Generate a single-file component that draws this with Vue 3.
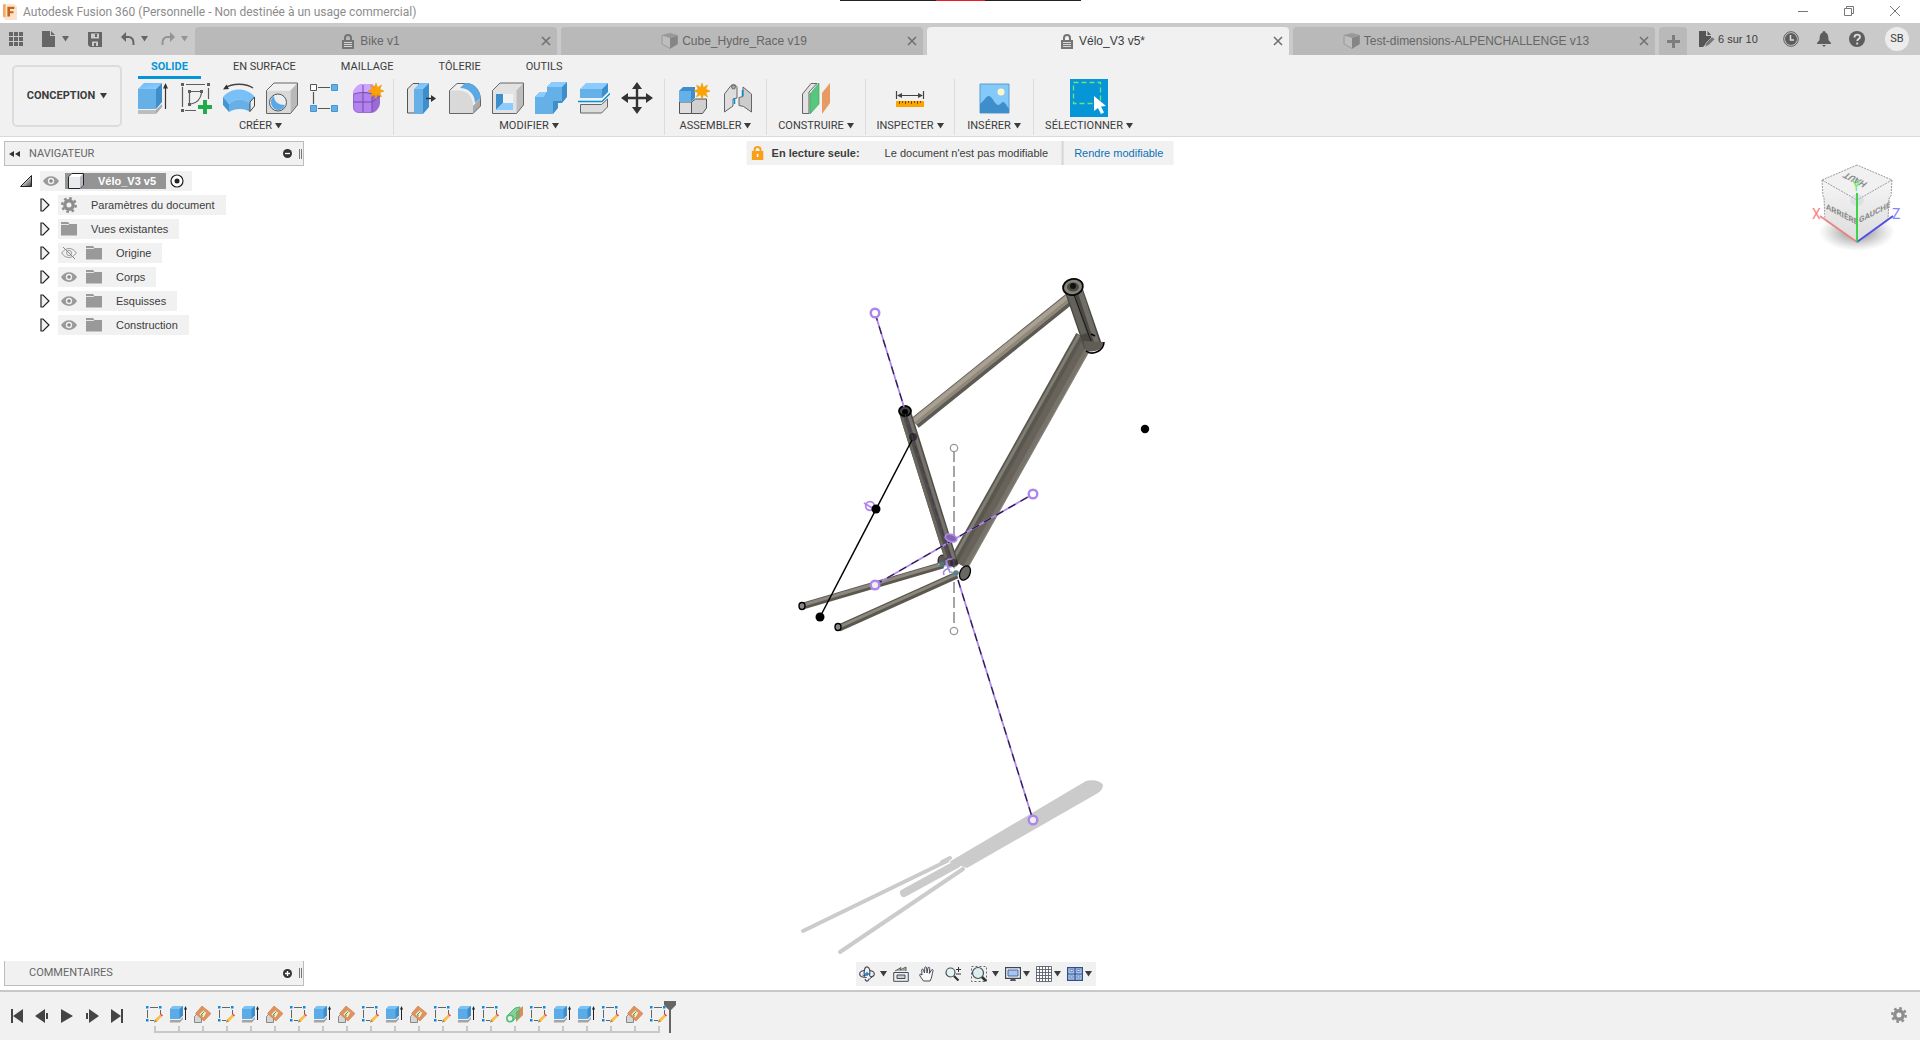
<script setup>
const documents = [
  { title: 'Bike v1', icon: 'lock', active: false },
  { title: 'Cube_Hydre_Race v19', icon: 'part', active: false },
  { title: 'Vélo_V3 v5*', icon: 'lock', active: true },
  { title: 'Test-dimensions-ALPENCHALLENGE v13', icon: 'part', active: false }
]

const ribbonTabs = ['SOLIDE', 'EN SURFACE', 'MAILLAGE', 'TÔLERIE', 'OUTILS']

const groups = [
  { label: 'CRÉER', id: 'create', tools: ['extrude', 'sketch', 'revolve', 'hole', 'pattern', 'form'] },
  { label: 'MODIFIER', id: 'modify', tools: ['presspull', 'fillet', 'shell', 'combine', 'split', 'move'] },
  { label: 'ASSEMBLER', id: 'assemble', tools: ['component', 'joint'] },
  { label: 'CONSTRUIRE', id: 'construct', tools: ['plane'] },
  { label: 'INSPECTER', id: 'inspect', tools: ['measure'] },
  { label: 'INSÉRER', id: 'insert', tools: ['image'] },
  { label: 'SÉLECTIONNER', id: 'select', tools: ['select'] }
]

const tree = [
  { label: 'Paramètres du document', icon: 'gear', eye: null },
  { label: 'Vues existantes', icon: 'folder', eye: null },
  { label: 'Origine', icon: 'folder', eye: 'eye-off' },
  { label: 'Corps', icon: 'folder', eye: 'eye' },
  { label: 'Esquisses', icon: 'folder', eye: 'eye' },
  { label: 'Construction', icon: 'folder', eye: 'eye' }
]

const viewTools = [
  { icon: 'orbit', menu: true },
  { icon: 'look', menu: false },
  { icon: 'hand', menu: false },
  { icon: 'zoom', menu: false },
  { icon: 'fit', menu: true },
  { icon: 'display', menu: true },
  { icon: 'grid', menu: true },
  { icon: 'panes', menu: true }
]

const playback = ['first', 'prev', 'play', 'next', 'last']

const timeline = 'sk ex pl sk ex pl sk ex pl sk ex pl sk ex sk pi sk ex ex sk pl sk'.split(' ')
</script>

<template>
  <div class="app">
    <svg class="defs" aria-hidden="true">
      <defs>
        <linearGradient id="gTop" x1="0" y1="0" x2="1" y2="1"><stop offset="0" stop-color="#6cb9f7" /><stop offset="1" stop-color="#8fd0ff" /></linearGradient>
        <linearGradient id="gEdge" x1="0" y1="0" x2="1" y2="1"><stop offset="0.3" stop-color="#fff" /><stop offset="1" stop-color="#333" /></linearGradient>
      </defs>

      <symbol id="i-lock" viewBox="0 0 12 15"><path d="M3 7V4a3 3 0 0 1 6 0v3" fill="none" stroke="currentColor" stroke-width="2" /><path d="M0 6h12v9H0z" fill="currentColor" /><path d="M2 8.500h8M2 10.500h8M2 12.500h8" stroke="#d8d8d8" /></symbol>
      <symbol id="i-part" viewBox="0 0 17 16"><path d="M1 2.500L9 .5l7.500 2V11L9 15.500 1 11z" fill="#bdbdbd" stroke="#999" /><path d="M1 2.500l8 2.500 7.500-2.500L9 .5z" fill="#999" /><path d="M9 5v10.500l7.500-4.500V2.500z" fill="#858585" /></symbol>
      <symbol id="i-caret" viewBox="0 0 7 6"><path d="M0 0h7L3.500 5.500z" fill="currentColor" /></symbol>
      <symbol id="i-close" viewBox="0 0 10 10"><path d="M1 1l8 8M9 1l-8 8" stroke="currentColor" stroke-width="1.600" fill="none" /></symbol>

      <symbol id="i-extrude" viewBox="0 0 32 32"><path d="M1 28h18l6-6v3l-6 7H1z" fill="#a9a9a9" /><path d="M1 28h18v4H1z" fill="#bdbdbd" /><path d="M1 7h18v20H1z" fill="#66b0e8" /><path d="M1 7l6-6h18l-6 6z" fill="url(#gTop)" /><path d="M19 7l6-6v19l-6 7z" fill="#3d8ecb" /><path d="M28.500 27V4" stroke="#333" stroke-width="1.200" /><path d="M26 6.500L28.500 1 31 6.500z" fill="#333" /></symbol>
      <symbol id="i-sketch" viewBox="0 0 32 32"><path d="M2.500 5v20M6 2.500h19M28.500 6v11M5 28.500h11" stroke="#5d5d5d" stroke-width="1.200" /><path d="M1 1h3v3H1zM27 1h3v3h-3zM1 27h3v3H1zM8 8h3v3H8zM20 8h3v3h-3zM8 21h3v3H8z" fill="#5d5d5d" /><path d="M11 9.500h9M9.500 11v10M21.500 11c-1 6-4 10-10.500 11" fill="none" stroke="#5d5d5d" stroke-width="1.200" /><path d="M23 18h4v5h5v4h-5v5h-4v-5h-5v-4h5z" fill="#20ac4b" /></symbol>
      <symbol id="i-revolve" viewBox="0 0 32 32"><path d="M2 6C9 1 23 1 30 6" fill="none" stroke="#444" stroke-width="1.300" /><path d="M0 7.500L3.500 2.500 6 7z" fill="#333" /><path d="M0 15C8 5 24 5 32 15l-5 7C20 16 12 16 6 22z" fill="#79c0f8" /><path d="M0 15v8l6 7v-8z" fill="#4595d3" /><path d="M6 22c6-6 15-6 21 0v8c-5-4-15-4-21 0z" fill="#66b0e8" /><path d="M27 20l4.500-5v9L27 29.500z" fill="#eee" stroke="#444" /></symbol>
      <symbol id="i-hole" viewBox="0 0 32 32"><path d="M.5 8.500h24v23H.5z" fill="#d9d9d9" /><path d="M.5 8.500L8 1h23.500l-7 7.500z" fill="#f0f0f0" /><path d="M24.500 8.500L31.500 1v22l-7 8.500z" fill="#b9b9b9" /><path d="M.5 8.500L8 1h23.500v22l-7 8.500H.5z" fill="none" stroke="#666" /><circle cx="12" cy="20.500" r="8.500" fill="#eee" stroke="#555" /><path d="M8 14c0 6 5 9 11 9a7 7 0 0 1-13 1c-2-4-1-8 2-10z" fill="#5aa9e6" /></symbol>
      <symbol id="i-pattern" viewBox="0 0 32 32"><path d="M9 5.500h12M4.500 10v12M9 26.500h12" stroke="#555" stroke-width="1.200" /><path d="M1.500 2.500h6v6h-6z" fill="#fff" stroke="#555" /><path d="M22.500 2.500h6v6h-6zM1.500 23.500h6v6h-6zM22.500 23.500h6v6h-6z" fill="#66b0e8" stroke="#4595d3" /></symbol>
      <symbol id="i-star" viewBox="0 0 16 16"><path d="M8 0l1.500 4.500L13.500 2l-1.700 4.300L16 8l-4.200 1.700 1.700 4.300-4-2.500L8 16l-1.500-4.500-4 2.500 1.700-4.300L0 8l4.200-1.700L2.500 2l4 2.500z" fill="#fda300" stroke="#e79100" stroke-width=".5" /></symbol>
      <symbol id="i-form" viewBox="0 0 32 32"><path d="M1 12c0-5 5-10 10-10h9l8 8v11c0 5-5 10-9 10H8c-4 0-7-2-7-6z" fill="#9b6ad6" /><path d="M1 12c0-5 5-10 10-10h9c3 3 3 5 0 9z" fill="#cda4ff" /><path d="M2 12h18v18H8c-4 0-6-2-6-5z" fill="#b283ee" /><path d="M1 20h19l8-6M11 3v27M20 11v19M2 12c6-2 14-2 18 0" fill="none" stroke="#744aa8" /><use href="#i-star" x="16" y="1" width="16" height="16" /></symbol>
      <symbol id="i-presspull" viewBox="0 0 32 32"><path d="M1.500 7L7 1.500h6V31H1.500z" fill="#e3e3e3" stroke="#555" /><path d="M8 7l6-6h9l-6 6z" fill="url(#gTop)" /><path d="M8 7h9v25H8z" fill="#66b0e8" /><path d="M17 7l6-6v24l-6 7z" fill="#3d8ecb" /><path d="M20 16.500h7" stroke="#333" stroke-width="1.500" /><path d="M25 13l5 3.500-5 3.500z" fill="#333" /></symbol>
      <symbol id="i-fillet" viewBox="0 0 32 32"><path d="M.5 8.500L8 1.500h9c8 0 14 6 14.500 16V24L24 31.500H.5z" fill="#efefef" /><path d="M.5 8.500H10c8 0 14 6 14 15v8H.5z" fill="#d9d9d9" /><path d="M24 24l7.500-8v8L24 31.500z" fill="#aaa" /><path d="M.5 8.500L8 1.500h9c8 0 14 6 14.500 16V24L24 31.500H.5z" fill="none" stroke="#666" /><path d="M11 6l5-5c8 0 15 5 15.500 15L26 21c0-9-7-15-15-15z" fill="#5aa9e6" /></symbol>
      <symbol id="i-shell" viewBox="0 0 32 32"><path d="M.5 8.500L8 1h23.500v22l-7 8.500H.5z" fill="#e2e2e2" /><path d="M24.500 8.500L31.500 1v22l-7 8.500z" fill="#bdbdbd" /><path d="M.5 8.500L8 1h23.500v22l-7 8.500H.5z" fill="none" stroke="#666" /><path d="M4 12h17v16H4z" fill="#f2f2f2" /><path d="M4 12h7v9l-7 7z" fill="#3d8ecb" /><path d="M4 28l7-7h10v7z" fill="#8accff" /></symbol>
      <symbol id="i-combine" viewBox="0 0 32 32"><path d="M0 15l5-5h7V5l5-5h15v15l-5 6h-4v5l-5 6H0z" fill="#3d8ecb" /><path d="M0 15h9l3-4V5h15v14h-9v13H0z" fill="#66b0e8" /><path d="M12 5l5-5h15l-5 5zM0 15l5-5h7l-3 5z" fill="#8accff" /></symbol>
      <symbol id="i-split" viewBox="0 0 32 32"><path d="M2 7h22v9H2z" fill="#66b0e8" /><path d="M2 7l6-6h22l-6 6z" fill="#8accff" /><path d="M24 7l6-6v9l-6 6z" fill="#3d8ecb" /><path d="M0 19.500h24l8-8" fill="none" stroke="#0091dc" stroke-width="1.300" /><path d="M2.500 22.500h21l6-5.500v8l-6 6h-21z" fill="#dcdcdc" stroke="#666" /></symbol>
      <symbol id="i-move" viewBox="0 0 32 32"><path d="M16 5v22M5 16h22" stroke="#333" stroke-width="2.400" /><path d="M16 0l5 7H11zM16 32l5-7H11zM0 16l7-5v10zM32 16l-7-5v10z" fill="#333" /></symbol>
      <symbol id="i-component" viewBox="0 0 32 32"><path d="M1.500 20h12v11.500h-12z" fill="#dedede" stroke="#555" /><path d="M13.500 20l4-3h11v9l-4 5.500h-11z" fill="#d0d0d0" stroke="#555" /><path d="M1 9l4-4h12v11l-4 4H1z" fill="#3d8ecb" /><path d="M1 9h12v11H1z" fill="#66b0e8" /><use href="#i-star" x="16" y="1" width="16" height="16" /></symbol>
      <symbol id="i-joint" viewBox="0 0 32 32"><path d="M3.500 12L10 3.500c3-2 6 0 6 2V16l-4 1v7l-8.500 6z" fill="#ddd" stroke="#666" /><circle cx="12.500" cy="5" r="2" fill="#aaa" stroke="#555" stroke-width=".8" /><path d="M30.500 30l-8-5.500-4.500-1v-8l4-1V5l8.500 7z" fill="#ccc" stroke="#666" /><path d="M13.500 16v6M21.500 8v6" stroke="#0091dc" stroke-width="1.500" /></symbol>
      <symbol id="i-plane" viewBox="0 0 32 32"><path d="M2.500 12L11 1.500h6L9 10v21.500H2.500z" fill="#e2e2e2" stroke="#666" /><path d="M10 12l9-11v21l-9 10z" fill="#56c77c" stroke="#38a05c" stroke-width=".6" /><path d="M22 11l8-10v20l-8 11z" fill="#e79a62" /></symbol>
      <symbol id="i-measure" viewBox="0 0 32 32"><path d="M2.500 9v8M29.500 9v8M5 13.500h22" stroke="#444" stroke-width="1.200" /><path d="M3 13.500L8 11v5zM29 13.500L24 11v5z" fill="#444" /><path d="M2 19h28v6H2z" fill="#fda300" /><path d="M5.500 19v3M8.500 19v2M11.500 19v3M14.500 19v2M17.500 19v3M20.500 19v2M23.500 19v3M26.500 19v2" stroke="#7c5000" /></symbol>
      <symbol id="i-image" viewBox="0 0 32 32"><path d="M2 2h29v29H2z" fill="#83c9fa" stroke="#5a9ccf" /><circle cx="23" cy="10" r="3.500" fill="#fff6c8" /><path d="M2 22c4-3 6-8 9-8s6 9 9 9 3-3 5-3 4 4 6 7v4H2z" fill="#3d8ecb" /></symbol>
      <symbol id="i-select" viewBox="0 0 38 38"><path d="M0 0h38v38H0z" fill="#0696d7" /><path d="M3.500 3.500h27v21h-27z" fill="none" stroke="#6fe07a" stroke-width="1.300" stroke-dasharray="5 3" /><path d="M24 17v15l4-3 3 6 3-1.500-3-6 5-.5z" fill="#fff" /></symbol>

      <symbol id="i-eye" viewBox="0 0 16 10"><path d="M0 5c4-6.500 12-6.500 16 0-4 6.500-12 6.500-16 0z" fill="#999" /><circle cx="8" cy="5" r="3.200" fill="#f1f1f1" /><circle cx="8" cy="5" r="1.800" fill="#888" /></symbol>
      <symbol id="i-eye-off" viewBox="0 0 16 12"><path d="M.7 6c4-6 11-6 14.600 0-4 6-11 6-14.600 0z" fill="none" stroke="#999" /><circle cx="8" cy="6" r="2.500" fill="none" stroke="#999" /><path d="M2 0l12 12" stroke="#888" /></symbol>
      <symbol id="i-folder" viewBox="0 0 16 14"><path d="M0 0h7l1.500 2H16v11.500H0z" fill="#999" /><path d="M0 2.500h8" stroke="#e5e5e5" /></symbol>
      <symbol id="i-gear" viewBox="0 0 16 16"><circle cx="8" cy="8" r="4.200" fill="none" stroke="#8d8d8d" stroke-width="3.400" /><circle cx="8" cy="8" r="6.800" fill="none" stroke="#8d8d8d" stroke-width="2.400" stroke-dasharray="2.700 2.640" /></symbol>

      <symbol id="i-orbit" viewBox="0 0 16 16"><path d="M5 4.500C2 5 .7 6.500.7 8c0 2 3 3.500 7 3.500M11 4.500c3 .6 4.300 2 4.300 3.500 0 1.500-1.500 2.700-4 3.200" fill="none" stroke="#444c5c" stroke-width="1.200" /><path d="M5.500 10C4.600 5 5.500.8 8 .8s3.400 4 2.600 8.500M6 13c.5 1.500 1.200 2.200 2 2.200 1 0 1.800-1 2.200-2.500" fill="none" stroke="#444c5c" stroke-width="1.200" /><path d="M10 9.500l3 1.500-2.500 2M3.500 9l2 1.500L7 8.500" fill="none" stroke="#444c5c" /><path d="M8 6v4M6 8h4" stroke="#0a7fd6" stroke-width="1.300" /></symbol>
      <symbol id="i-look" viewBox="0 0 16 16"><path d="M.7 6.500h14.600v8.800H.7z" fill="#eee" stroke="#444c5c" /><path d="M4 9h8v3.500H4z" fill="#ccc" stroke="#444c5c" /><path d="M2 5l6-3.500L7 4l6-3v4" fill="#aaa" stroke="#555" stroke-width=".9" /></symbol>
      <symbol id="i-hand" viewBox="0 0 16 16"><path d="M4.500 15L1 10c-1-2 .5-2.500 2-1L2.700 4c.2-1.200 1.500-1.200 1.800 0L5.500 7 5.800 1.700c.2-1.200 1.600-1.200 1.800 0L8 7l1-5c.3-1.200 1.700-1 1.700.3L10.400 7.500l2-3.500c.8-1 2-.4 1.600.8-1 3-1 7.200-3 10.200z" fill="#fafafa" stroke="#333a48" stroke-width=".9" /></symbol>
      <symbol id="i-zoom" viewBox="0 0 16 16"><circle cx="5.500" cy="6.500" r="4.500" fill="#e4f2f2" stroke="#444c5c" stroke-width="1.200" /><path d="M9 10l4.500 4.500" stroke="#333" stroke-width="2.200" /><path d="M13.500 1v5M11 3.500h5M11 8h5" stroke="#333" /></symbol>
      <symbol id="i-fit" viewBox="0 0 16 16"><path d="M.5 .5h15v15H.5z" fill="none" stroke="#666" stroke-dasharray="2 2" /><circle cx="7" cy="7" r="5.500" fill="#dcefed" stroke="#444c5c" stroke-width="1.200" /><path d="M11 11l4 4" stroke="#333" stroke-width="2.600" /></symbol>
      <symbol id="i-display" viewBox="0 0 16 16"><path d="M.6 1.600h14.800v10.800H.6z" fill="#f4f4f4" stroke="#3d4656" stroke-width="1.200" /><path d="M3 4h10v6H3z" fill="#a8c5ee" stroke="#4568a0" /><path d="M5 15h6l-1-2.500H6z" fill="#555" /></symbol>
      <symbol id="i-grid" viewBox="0 0 16 16"><path d="M.5 .5h15v15H.5z" fill="#fff" /><path d="M.5 .5h15v15H.5zM3.500 0v16M6.500 0v16M9.500 0v16M12.500 0v16M0 3.500h16M0 6.500h16M0 9.500h16M0 12.500h16" fill="none" stroke="#59606c" stroke-width=".9" /></symbol>
      <symbol id="i-panes" viewBox="0 0 16 16"><path d="M.6 1.600h14.800v12.800H.6zM8 1.600v12.800M.6 8h14.800" fill="#a8c5ee" stroke="#2f4f86" stroke-width="1.200" /><path d="M3 3.500h3v2H3zM10 3.500h3v2h-3zM3 10h3v2H3zM10 10h3v2h-3z" fill="#d9e6fa" stroke="#56749f" stroke-width=".7" /></symbol>

      <symbol id="i-first" viewBox="0 0 14 14"><path d="M1 0h2v14H1zM13 0v14L3 7z" fill="#444" /></symbol>
      <symbol id="i-prev" viewBox="0 0 14 14"><path d="M10 0v14L0 7zM11 4h2v6h-2z" fill="#444" /></symbol>
      <symbol id="i-play" viewBox="0 0 14 14"><path d="M1 0l12 7-12 7z" fill="#444" /></symbol>
      <symbol id="i-next" viewBox="0 0 14 14"><path d="M4 0l10 7-10 7zM1 4h2v6H1z" fill="#444" /></symbol>
      <symbol id="i-last" viewBox="0 0 14 14"><path d="M11 0h2v14h-2zM1 0l10 7L1 14z" fill="#444" /></symbol>

      <symbol id="t-sk" viewBox="0 0 17 17"><path d="M4 1.500h8M1.500 4v8M14.500 4v4M4 14.500h4" stroke="#666" /><path d="M0 0h2.500v2.500H0zM13 0h2.500v2.500H13zM0 13h2.500v2.500H0z" fill="#0a8de0" /><path d="M8 16.500l1-3 5-5 2 2-5 5z" fill="#fbc04a" /><path d="M8 16.500l1-3 2 2z" fill="#a98755" /><path d="M14 8.500l1-1 2 2-1 1z" fill="#ef3e42" /></symbol>
      <symbol id="t-ex" viewBox="0 0 17 17"><path d="M0 14h10l3-3v2l-3 3.500H0z" fill="#a5a5a5" /><path d="M0 3l3-3h10v9.500L9.500 13H0z" fill="#3d8ecb" /><path d="M0 3h9.500v10H0z" fill="#5aabe6" /><path d="M0 3l3-3h10L9.500 3z" fill="#7cc2f6" /><path d="M15.500 14V2" stroke="#222" /><path d="M14 3.500L15.500 0 17 3.500z" fill="#222" /></symbol>
      <symbol id="t-pl" viewBox="0 0 17 17"><path d="M.5 10.500l3-3h4v9h-7z" fill="#d5d5d5" stroke="#888" /><path d="M8 0l9 7.500L10 15 1.500 7.500z" fill="#e0935c" stroke="#c97840" stroke-width=".6" /><path d="M6 9l4-4M8 8l3-1-2 4" stroke="#eafbe9" stroke-width="1.500" fill="none" /><path d="M7 9l3-3" stroke="#1f9f4a" /></symbol>
      <symbol id="t-pi" viewBox="0 0 17 17"><path d="M1 10l8-8 5-1v6l-7 8z" fill="#7fd29b" stroke="#3aa560" stroke-width=".8" /><path d="M10 6l7-6v9l-7 7z" fill="#d98e5a" /><path d="M10 6l4-3v8l-4 3z" fill="#8aa56b" /><circle cx="4" cy="12.500" r="3.200" fill="#eee" stroke="#4fbf75" stroke-width="1.500" /></symbol>
    </svg>

    <header class="titlebar">
      <svg class="logo" viewBox="0 0 16 18"><path d="M0 0h13l3 3v15H3l-3-3z" fill="#fbe3cc" /><path d="M0 0h3v15l-3-1z" fill="#f4a868" /><path d="M5 3h8v2.500H8V8h4v2.500H8V14H5z" fill="#c76414" /></svg>
      <span class="title">Autodesk Fusion 360 (Personnelle - Non destinée à un usage commercial)</span>
      <div class="notch"></div>
      <div class="window-controls">
        <button aria-label="Réduire"><svg width="12" height="12" viewBox="0 0 12 12"><path d="M1 6.500h10" stroke="#777" /></svg></button>
        <button aria-label="Restaurer"><svg width="12" height="12" viewBox="0 0 12 12"><path d="M1.500 3.500h7v7h-7zM3.500 3.500v-2h7v7h-2" fill="none" stroke="#777" /></svg></button>
        <button aria-label="Fermer"><svg width="12" height="12" viewBox="0 0 12 12"><path d="M1 1l10 10M11 1L1 11" stroke="#777" /></svg></button>
      </div>
    </header>

    <div class="tabbar">
      <div class="quick">
        <button aria-label="Données"><svg width="14" height="14" viewBox="0 0 14 14"><path d="M0 0h4v4H0zM5 0h4v4H5zM10 0h4v4h-4zM0 5h4v4H0zM5 5h4v4H5zM10 5h4v4h-4zM0 10h4v4H0zM5 10h4v4H5zM10 10h4v4h-4z" fill="#666" /></svg></button>
        <button class="split-button" aria-label="Fichier"><svg width="14" height="16" viewBox="0 0 14 16"><path d="M0 0h8v5h5v11H0zM9 0l4 4H9z" fill="#666" /></svg><svg class="caret"><use href="#i-caret" /></svg></button>
        <button aria-label="Enregistrer"><svg width="14" height="15" viewBox="0 0 14 15"><path d="M0 0h14v15H2l-2-2z" fill="#666" /><path d="M3 1.500h8v5H3zM4 9.500h6V14H4z" fill="#ccc" /><path d="M7 2h2v3H7zM6 11h2v3H6z" fill="#666" /></svg></button>
        <button class="split-button" aria-label="Annuler"><svg width="14" height="14" viewBox="0 0 14 14"><path d="M3 5h5c3 0 5 3 4.500 8" fill="none" stroke="#666" stroke-width="2" /><path d="M0 5l5-5v10z" fill="#666" /></svg><svg class="caret"><use href="#i-caret" /></svg></button>
        <button class="split-button faded" aria-label="Rétablir"><svg width="14" height="14" viewBox="0 0 14 14"><path d="M11 5H6c-3 0-5 3-4.500 8" fill="none" stroke="#949494" stroke-width="2" /><path d="M14 5L9 0v10z" fill="#949494" /></svg><svg class="caret"><use href="#i-caret" /></svg></button>
      </div>
      <div class="documents">
        <div v-for="d in documents" :key="d.title" class="document" :class="{ active: d.active }">
          <span class="document-title"><svg :class="d.icon"><use :href="'#i-' + d.icon" /></svg>{{ d.title }}</span>
          <button class="close" aria-label="Fermer l'onglet"><svg width="10" height="10"><use href="#i-close" /></svg></button>
        </div>
        <button class="add" aria-label="Nouvel onglet"><svg width="13" height="13" viewBox="0 0 13 13"><path d="M6.500 0v13M0 6.500h13" stroke="#7d7d7d" stroke-width="3" /></svg></button>
      </div>
      <div class="account">
        <button class="quota"><svg width="16" height="16" viewBox="0 0 16 16"><path d="M0 0h7v5h5v2l-7 8-1 1H0zM8.500 0L12 4H8.500z" fill="#555" /><path d="M6 16l1-4 6-6 3 2-6 6z" fill="#777" stroke="#ccc" stroke-width=".6" /></svg>6 sur 10</button>
        <button class="status" aria-label="Tâches"><svg width="16" height="16" viewBox="0 0 16 16"><circle cx="8" cy="8" r="7.300" fill="none" stroke="#5d5d5d" /><circle cx="8" cy="8" r="6" fill="#5d5d5d" /><path d="M7.500 4v5H11" fill="none" stroke="#ddd" stroke-width="1.500" /></svg></button>
        <button class="status" aria-label="Notifications"><svg width="14" height="16" viewBox="0 0 14 16"><path d="M7 0c1 0 1.500.8 1.500 1.500C11 2.500 11.500 5 11.500 9l2.500 3v1H0v-1l2.500-3c0-4 .5-6.500 3-7.500C5.500.8 6 0 7 0zM5 14h4l-2 2z" fill="#5d5d5d" /></svg></button>
        <button class="status" aria-label="Aide"><svg width="16" height="16" viewBox="0 0 16 16"><circle cx="8" cy="8" r="8" fill="#5d5d5d" /><path d="M5.500 6.500c0-4 5.500-3.500 5.500-.5 0 2-2.800 2-2.800 4M8.200 11.500v2" fill="none" stroke="#ddd" stroke-width="1.800" /></svg></button>
        <button class="avatar">SB</button>
      </div>
    </div>

    <div class="ribbon">
      <button class="workspace">CONCEPTION <svg class="caret"><use href="#i-caret" /></svg></button>
      <div class="ribbon-main">
        <nav class="ribbon-tabs">
          <button v-for="(t, i) in ribbonTabs" :key="t" :class="{ current: i === 0 }">{{ t }}</button>
        </nav>
        <div class="groups">
          <section v-for="g in groups" :key="g.id" class="group" :class="g.id">
            <div class="tools">
              <button v-for="t in g.tools" :key="t" class="tool" :aria-label="t"><svg><use :href="'#i-' + t" /></svg></button>
            </div>
            <button class="group-label">{{ g.label }}<svg class="caret"><use href="#i-caret" /></svg></button>
          </section>
        </div>
      </div>
    </div>

    <main class="viewport">
      <svg class="model" viewBox="0 137 1920 853">
        <g fill="#cbcbcb" stroke="#cbcbcb" stroke-linecap="round">
          <path d="M1086 781c7-2 15 0 17 4 0 3-2 6-5 8L967 868l-18-6z" stroke="none" />
          <path d="M957 864L904 893" stroke-width="8" />
          <path d="M947 861L803 931" stroke-width="4" />
          <path d="M963 869L840 952M942 862l8-4" stroke-width="4" />
        </g>
        <g fill="none">
          <ellipse cx="942" cy="561" rx="4" ry="6" fill="#5c5952" stroke="#111" />
          <path d="M803 606L943 565M839 628l118-53" stroke="#5b5850" stroke-width="7" />
          <path d="M803 605L943 564M839 627l118-53" stroke="#8c887e" stroke-width="3" />
          <path d="M1073 296L915 423" stroke="#5d5a53" stroke-width="12" />
          <path d="M1072 295L914 422" stroke="#8e877b" stroke-width="8" />
          <path d="M1071 294L913 421" stroke="#a9a092" stroke-width="4" />
          <path d="M1085 338L959 563" stroke="#5a574f" stroke-width="20" />
          <path d="M1089 341L963 566" stroke="#85827a" stroke-width="11" />
          <path d="M1087 340L961 565" stroke="#67635a" stroke-width="8" />
          <path d="M1091 342L965 567" stroke="#77726a" stroke-width="4" />
          <path d="M1079 335L953 560" stroke="#807d74" stroke-width="3" />
          <path d="M1073 288l20 58" stroke="#4a4842" stroke-width="18" />
          <path d="M1079 288l18 55" stroke="#716e67" stroke-width="5" />
          <path d="M1070 294l14 40" stroke="#65625b" stroke-width="6" />
          <path d="M1073 292l18 49" stroke="#1a1a1a" />
          <path d="M1083 341l21 1c0 7-9 11-18 9z" fill="#605d56" />
          <path d="M1086 351c6 5 18 0 18-9M1091 334l4 2" stroke="#000" stroke-width="1.500" />
          <path d="M905 412l48 154" stroke="#504e47" stroke-width="12" />
          <path d="M908 412l47 150" stroke="#77746c" stroke-width="3" />
          <path d="M902 418l44 140" stroke="#6a675f" stroke-width="3" />
          <ellipse cx="1073" cy="287" rx="10" ry="8" fill="#86827a" stroke="#050505" stroke-width="1.800" transform="rotate(-12 1073 287)" />
          <ellipse cx="1073" cy="287" rx="6" ry="4.500" fill="#4b4943" /><circle cx="1073" cy="286" r="3" fill="#111" />
          <ellipse cx="905" cy="411" rx="6" ry="5" fill="#444" stroke="#000" stroke-width="1.800" /><circle cx="905" cy="412" r="3" fill="#000" />
          <circle cx="913" cy="437" r="4" fill="#22222a" opacity=".8" />
          <path d="M912 440L820 617" stroke="#000" stroke-width="1.500" />
          <ellipse cx="802" cy="606" rx="3" ry="3.500" fill="#888" stroke="#000" stroke-width="1.400" />
          <ellipse cx="838" cy="627" rx="3" ry="3.500" fill="#888" stroke="#000" stroke-width="1.400" />
          <ellipse cx="965" cy="573" rx="5" ry="7.500" fill="#696762" stroke="#000" stroke-width="1.300" transform="rotate(25 965 573)" />
          <path d="M954 451v88M954 582v46" stroke="#888" stroke-width="1.500" stroke-dasharray="11 4" />
          <circle cx="954" cy="448" r="3.700" fill="#fff" stroke="#999" stroke-width="1.300" /><circle cx="954" cy="631" r="3.700" fill="#fff" stroke="#999" stroke-width="1.300" />
          <path d="M875 313l29 94M958 580l75 240M875 585l158-91" stroke="#b088ec" stroke-width="1.800" />
          <path d="M875 313l29 94M958 580l75 240M875 585l158-91" stroke="#241b3b" stroke-width="1.200" stroke-dasharray="8 6" />
          <path d="M905 414l51 160" stroke="#463466" stroke-dasharray="8 3" />
          <g stroke="#ad85eb" stroke-width="2.400">
            <circle cx="875" cy="313" r="4.300" fill="#fff" /><circle cx="875" cy="585" r="4.300" fill="#eee" /><circle cx="1033" cy="494" r="4.300" fill="#fff" /><circle cx="1033" cy="820" r="4.300" fill="#eee" />
            <circle cx="870" cy="506" r="4.300" stroke-width="1.800" /><path d="M864 503l10 6" stroke-width="1.800" />
            <ellipse cx="951" cy="538" rx="6" ry="3.500" stroke-width="1.800" transform="rotate(20 951 538)" fill="#8067a8" /><circle cx="950" cy="563" r="4" stroke-width="1.500" /><path d="M946 560l4 13M944 575a4 4 0 0 1 6-5" stroke-width="1.500" />
          </g>
          <path d="M938 564l7 2 6 6 6 3" stroke="#79b7c5" stroke-dasharray="3 2" stroke-width="1.500" /><circle cx="942" cy="564" r="2.500" fill="#54727a" /><circle cx="956" cy="573" r="2.800" fill="#5b8089" /><circle cx="954" cy="563" r="4" fill="#26232a" opacity=".7" />
        </g>
        <circle cx="876" cy="509" r="4.500" /><circle cx="820" cy="617" r="4.500" /><circle cx="1145" cy="429" r="4.200" />
      </svg>

      <aside class="navigator">
        <div class="panel-title">
          <svg class="collapse" width="11" height="6" viewBox="0 0 11 6"><path d="M5 0v6L0 3zM11 0v6L6 3z" fill="#333" /></svg>
          <span class="panel-name">NAVIGATEUR</span>
          <svg class="round" width="9" height="9" viewBox="0 0 9 9"><circle cx="4.500" cy="4.500" r="4.500" fill="#333" /><path d="M2 4.500h5" stroke="#fff" stroke-width="1.300" /></svg>
          <span class="grip"></span>
        </div>
        <ul class="tree">
          <li class="root">
            <svg width="12" height="12" viewBox="0 0 12 12"><path d="M11.500.5v11H.5z" fill="url(#gEdge)" stroke="#222" /></svg>
            <div class="row">
              <svg class="eye"><use href="#i-eye" /></svg>
              <span class="root-name"><svg width="16" height="16" viewBox="0 0 16 16"><path d="M.5 4L4 .5h11.500V12L12 15.500H.5z" fill="#e8eaee" stroke="#222" /><path d="M1 4l3-3h11l-3 3z" fill="#fff" /><path d="M12 4l3-3v11l-3 3z" fill="#b5b8bf" /></svg>Vélo_V3 v5</span>
              <svg width="14" height="14" viewBox="0 0 14 14"><circle cx="7" cy="7" r="6" fill="#fff" stroke="#222" stroke-width="1.200" /><circle cx="7" cy="7" r="2.500" fill="#222" /></svg>
            </div>
          </li>
          <li v-for="n in tree" :key="n.label">
            <svg width="10" height="14" viewBox="0 0 10 14"><path d="M1 1h2l6 6-6 6H1z" fill="#f0f0f0" stroke="#222" stroke-width="1.200" /></svg>
            <div class="row">
              <svg v-if="n.eye" class="eye"><use :href="'#i-' + n.eye" /></svg>
              <svg class="node-icon"><use :href="'#i-' + n.icon" /></svg>
              <span>{{ n.label }}</span>
            </div>
          </li>
        </ul>
      </aside>

      <div class="banner">
        <svg width="12" height="14" viewBox="0 0 12 14"><path d="M3 6V4a3 3 0 0 1 6 0v2" fill="none" stroke="#f9a01b" stroke-width="2" /><path d="M0 5h12v9H0z" fill="#f9a01b" /><path d="M6 8v3" stroke="#fff" stroke-width="1.500" /></svg>
        <strong>En lecture seule:</strong>
        <span class="message">Le document n'est pas modifiable</span>
        <a href="#">Rendre modifiable</a>
      </div>

      <svg class="cube" viewBox="0 0 120 110">
        <defs>
          <radialGradient id="cubeShadow"><stop offset="0.3" stop-color="#777" stop-opacity=".6" /><stop offset="1" stop-color="#999" stop-opacity="0" /></radialGradient>
          <linearGradient id="cubeFace" x1="0" y1="0" x2="0" y2="1"><stop offset="0" stop-color="#f5f5f5" /><stop offset="1" stop-color="#dcdcdc" /></linearGradient>
        </defs>
        <ellipse cx="57" cy="82" rx="38" ry="19" fill="url(#cubeShadow)" />
        <path d="M22 30l35 20v42L26 70z" fill="url(#cubeFace)" /><path d="M92 30L57 50v42l31-22z" fill="url(#cubeFace)" />
        <path d="M57 15L22 30l35 20 35-20z" fill="#f1f1f1" />
        <path d="M57 15L22 30l35 20 35-20zM22 30l1 16 1 2 1 22 32 22 31-22 1-22 2-2 1-16" fill="none" stroke="#8f8f8f" stroke-width=".9" stroke-dasharray="2 1" />
        <ellipse cx="57" cy="50" rx="7" ry="6" fill="#c9d0d8" opacity=".4" />
        <g fill="#8a8a8c" font-family="Roboto, sans-serif" font-weight="bold" font-size="8">
          <text transform="translate(26 59) skewY(27)">ARRIÈRE</text>
          <text transform="translate(59 73) skewY(-27)">GAUCHE</text>
          <text transform="translate(68 33) rotate(207) skewX(-20)" font-size="9">HAUT</text>
        </g>
        <path d="M20 66l37 26" stroke="#f08080" stroke-width="2" opacity=".9" /><path d="M57 92l36-26" stroke="#5050e8" stroke-width="2" /><path d="M57 92V43" stroke="#2fd13b" stroke-width="1.800" />
        <g font-family="Roboto, sans-serif" font-size="14"><text x="12" y="69" fill="#ff8080">X</text><text x="92" y="69" fill="#8484ff">Z</text><text x="52" y="41" fill="#6fea76">Y</text></g>
      </svg>

      <div class="view-row">
        <div class="view-tools">
          <button v-for="v in viewTools" :key="v.icon" :class="[v.icon, { menu: v.menu }]" :aria-label="v.icon"><svg class="view-icon"><use :href="'#i-' + v.icon" /></svg><svg v-if="v.menu" class="caret"><use href="#i-caret" /></svg></button>
        </div>
      </div>

      <div class="comments panel-title">
        <span class="panel-name">COMMENTAIRES</span>
        <svg class="round" width="9" height="9" viewBox="0 0 9 9"><circle cx="4.500" cy="4.500" r="4.500" fill="#333" /><path d="M2 4.500h5M4.500 2v5" stroke="#fff" stroke-width="1.300" /></svg>
        <span class="grip"></span>
      </div>
    </main>

    <footer class="timeline">
      <div class="playback">
        <button v-for="p in playback" :key="p" :aria-label="p"><svg width="14" height="14"><use :href="'#i-' + p" /></svg></button>
      </div>
      <ol class="features">
        <li v-for="(f, i) in timeline" :key="i"><svg width="17" height="17"><use :href="'#t-' + f" /></svg></li>
      </ol>
      <svg class="marker" width="12" height="32" viewBox="0 0 12 32"><path d="M0 0h12v4L7 9v23H5V9L0 4z" fill="#666" /></svg>
      <button class="settings" aria-label="Paramètres"><svg width="16" height="16"><use href="#i-gear" /></svg></button>
    </footer>
  </div>
</template>

<style>
body {
  margin: 0;
  background: #fff;
}
</style>

<style scoped>
.app {
  display: flex;
  flex-direction: column;
  min-height: 100vh;
  font: 11px/16px "Liberation Sans", Arial, sans-serif;
  color: #3c3c3c;
}
.defs {
  position: absolute;
  width: 0;
  height: 0;
}
svg {
  display: block;
  flex: none;
}
button {
  display: flex;
  align-items: center;
  justify-content: center;
  padding: 0;
  border: 0;
  background: none;
  font: inherit;
  color: inherit;
}
.caret {
  width: 7px;
  height: 6px;
}

.titlebar {
  position: relative;
  display: flex;
  align-items: center;
  height: 23px;
  padding-left: 3px;
  background: #fff;
}
.logo {
  width: 14px;
  height: 16px;
}
.title {
  margin-left: 6px;
  font: 12px/16px Roboto, "Noto Sans", sans-serif;
  color: #8c8c8c;
}
.notch {
  position: absolute;
  top: 0;
  left: 50%;
  width: 241px;
  height: 1px;
  margin-left: -120px;
  background: linear-gradient(90deg, #222 40%, #ec1c24 40%, #ec1c24 60%, #222 60%);
}
.window-controls {
  display: flex;
  gap: 34px;
  margin-left: auto;
  padding: 0 19px 2px 0;
}

.tabbar {
  display: flex;
  height: 32px;
  background: #cacaca;
}
.quick {
  display: flex;
  align-items: center;
  box-sizing: border-box;
  width: 195px;
  padding-left: 9px;
}
.quick > button + button {
  margin-left: 19px;
}
.quick > .split-button + .split-button {
  margin-left: 13px;
}
.split-button {
  gap: 6px;
  color: #666;
}
.faded {
  color: #949494;
}
.documents {
  display: flex;
  flex: 1;
  align-items: flex-end;
  gap: 4px;
}
.document {
  display: flex;
  flex: 1;
  align-items: center;
  height: 28px;
  border-radius: 4px 4px 0 0;
  background: #b9b9b9;
  color: #666;
}
.document.active {
  background: #f1f1f1;
  color: #3c3c3c;
}
.document-title {
  display: flex;
  flex: 1;
  align-items: center;
  justify-content: center;
  font-size: 12px;
  white-space: nowrap;
}
.document-title .lock {
  width: 12px;
  height: 15px;
  margin: 0 6px;
  color: #757575;
}
.document-title .part {
  width: 17px;
  height: 16px;
  margin-right: 4px;
}
.close {
  margin-right: 6px;
  color: #707070;
}
.add {
  width: 28px;
  height: 28px;
  border-radius: 4px 4px 0 0;
  background: #b9b9b9;
}
.account {
  display: flex;
  align-items: center;
  box-sizing: border-box;
  width: 233px;
  padding: 0 11px 0 12px;
}
.quota {
  gap: 3px;
  margin-right: auto;
}
.status {
  width: 16px;
  margin-right: 17px;
}
.avatar {
  width: 24px;
  height: 24px;
  margin-left: 3px;
  border-radius: 50%;
  background: #ececec;
  font: 11px/16px Roboto, sans-serif;
}

.ribbon {
  display: flex;
  height: 81px;
  border-bottom: 1px solid #dadada;
  background: #f1f1f1;
  font: 11px/16px Roboto, "Liberation Sans", sans-serif;
}
.workspace {
  box-sizing: border-box;
  width: 110px;
  height: 62px;
  margin: 10px 0 0 12px;
  gap: 5px;
  border: 2px solid #dcdcdc;
  border-radius: 5px;
  font-weight: bold;
}
.ribbon-main {
  flex: 1;
}
.ribbon-tabs {
  display: flex;
  gap: 19px;
  height: 24px;
  margin-left: 16px;
}
.ribbon-tabs button {
  box-sizing: border-box;
  padding: 2px 13px 0;
  border-bottom: 3px solid transparent;
}
.ribbon-tabs .current {
  border-color: #0696d7;
  color: #0696d7;
  font-weight: bold;
}
.groups {
  display: flex;
  padding-left: 6px;
}
.group {
  display: flex;
  flex-direction: column;
  align-items: center;
  box-sizing: border-box;
  height: 56px;
  border-right: 1px solid #dcdcdc;
}
.tools {
  display: flex;
  height: 39px;
}
.tool {
  width: 43px;
  height: 38px;
}
.tool svg {
  width: 32px;
  height: 32px;
}
.select .tool svg {
  width: 38px;
  height: 38px;
}
.group-label {
  gap: 3px;
  height: 18px;
}
.create { width: 266px; }
.modify { width: 271px; }
.assemble { width: 102px; }
.construct { width: 99px; }
.inspect { width: 89px; }
.insert { width: 79px; }
.select {
  width: 110px;
  border: 0;
}

.viewport {
  position: relative;
  display: flex;
  flex: 1;
  flex-direction: column;
  min-height: 600px;
  background: #fff;
}
.model {
  position: absolute;
  width: 100%;
  height: 100%;
}
.navigator {
  position: relative;
  margin: 4px 0 0 4px;
  width: 300px;
}
.panel-title {
  display: flex;
  align-items: center;
  box-sizing: border-box;
  width: 300px;
  height: 25px;
  padding: 0 1px 0 24px;
  border: 1px solid #bdbdbd;
  background: #f1f1f1;
  font: 11px/16px Roboto, sans-serif;
  color: #666;
}
.collapse {
  margin: 0 9px 0 -20px;
}
.round {
  margin-left: auto;
}
.grip {
  width: 1px;
  height: 10px;
  margin-left: 7px;
  border: solid #777;
  border-width: 0 1px;
}
.tree {
  display: flex;
  flex-direction: column;
  gap: 4px;
  margin: 5px 0 0;
  padding: 0;
  list-style: none;
}
.tree li {
  display: flex;
  align-items: center;
  gap: 8px;
  padding-left: 36px;
}
.tree .root {
  padding-left: 16px;
}
.row {
  display: flex;
  align-items: center;
  height: 20px;
  padding: 0 11px 0 3px;
  background: #f1f1f1;
}
.eye {
  width: 16px;
  height: 12px;
  margin-right: 9px;
}
.root .eye {
  margin-right: 6px;
}
.root .row {
  padding-right: 8px;
}
.node-icon {
  width: 16px;
  height: 16px;
  margin-right: 14px;
}
.root-name {
  display: flex;
  align-items: center;
  gap: 14px;
  height: 16px;
  margin-right: 4px;
  padding: 0 10px 0 3px;
  background: #949494;
  color: #fff;
  font-weight: bold;
}
.banner {
  position: absolute;
  top: 4px;
  left: 50%;
  display: flex;
  align-items: center;
  height: 24px;
  padding: 0 10px 0 5px;
  background: #f1f1f1;
  transform: translateX(-50%);
  white-space: nowrap;
}
.banner strong {
  margin: 0 25px 0 8px;
}
.message {
  padding-right: 13px;
  border-right: 2px solid #d5d5d5;
  line-height: 24px;
}
.banner a {
  margin-left: 11px;
  color: #0a73b5;
  text-decoration: none;
}
.cube {
  position: absolute;
  top: 13px;
  right: 0;
  width: 120px;
  height: 110px;
}
.view-row {
  position: absolute;
  right: 0;
  bottom: 4px;
  left: 31px;
  display: flex;
  justify-content: center;
}
.view-tools {
  display: flex;
  align-items: center;
  gap: 10px;
  height: 24px;
  padding: 0 8px 0 3px;
  background: #f1f1f1;
}
.view-tools .menu {
  gap: 5px;
  margin-right: -4px;
}
.view-tools .display,
.view-tools .grid,
.view-tools .panes {
  gap: 2px;
}
.view-icon {
  width: 16px;
  height: 16px;
}
.comments {
  position: relative;
  margin: auto 0 4px 4px;
  border-top: 0;
}

.timeline {
  display: flex;
  align-items: flex-start;
  box-sizing: border-box;
  height: 50px;
  border-top: 2px solid #c8c8c8;
  background: #f1f1f1;
}
.playback {
  display: flex;
  gap: 11px;
  margin: 17px 0 0 10px;
}
.features {
  display: flex;
  margin: 14px 0 0 22px;
  padding: 0;
  list-style: none;
}
.features li {
  position: relative;
  width: 24px;
  height: 27px;
}
.features li::before {
  content: "";
  position: absolute;
  right: 14px;
  bottom: 0;
  width: 24px;
  height: 2px;
  background: #c8c8c8;
}
.features li:first-child::before {
  width: 2px;
}
.features li::after {
  content: "";
  position: absolute;
  right: 14px;
  bottom: 0;
  width: 2px;
  height: 7px;
  background: #c8c8c8;
}
.marker {
  margin: 9px 0 0 -10px;
}
.settings {
  margin: 15px 13px 0 auto;
}
</style>
